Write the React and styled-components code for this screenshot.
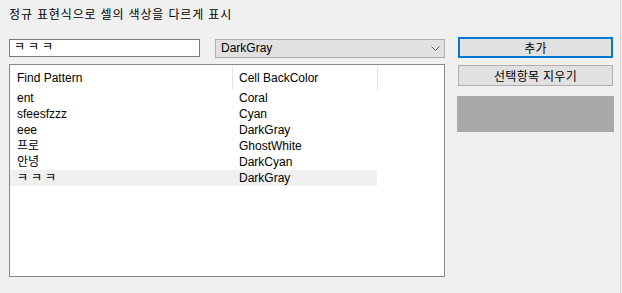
import React from "react";
import styled, { createGlobalStyle } from "styled-components";

const Global = createGlobalStyle`
  * { box-sizing: border-box; }
  html, body { margin: 0; padding: 0; background: #f0f0f0; }
  body {
    font-family: "Liberation Sans", "Noto Sans CJK KR", sans-serif;
    font-size: 12px;
    color: #000;
  }
`;

const Page = styled.div`
  width: 621px;
  height: 293px;
  border-right: 1px solid #d9d9d9;
  background: #f0f0f0;
  padding: 7px 0 0 9px;
  display: flex;
  flex-direction: column;
`;

const Title = styled.div`
  height: 16px;
  line-height: 16px;
  letter-spacing: 0.85px;
  white-space: nowrap;
`;

const Main = styled.div`
  margin-top: 14px;
  display: flex;
  align-items: flex-start;
  gap: 12px;
`;

const LeftColumn = styled.div`
  width: 436px;
  padding-top: 2px;
  display: flex;
  flex-direction: column;
`;

const InputRow = styled.div`
  display: flex;
  align-items: flex-start;
  gap: 15px;
`;

const TextBox = styled.div`
  width: 191px;
  height: 18px;
  border: 1px solid #7a7a7a;
  background: #fff;
  padding-left: 4px;
  line-height: 14px;
  white-space: nowrap;
`;

const Jamo = styled.span`
  letter-spacing: 3px;
`;

const Combo = styled.div`
  width: 230px;
  height: 19px;
  border: 1px solid #adadad;
  background: #e1e1e1;
  padding: 0 4px 0 5px;
  display: flex;
  align-items: center;
  justify-content: space-between;
`;

const ComboText = styled.span`
  line-height: 17px;
`;

const ListView = styled.div`
  margin-top: 6px;
  height: 213px;
  border: 1px solid #828790;
  background: #fff;
  display: flex;
  flex-direction: column;
`;

const HeaderRow = styled.div`
  display: flex;
  height: 25px;
`;

const HeaderCell = styled.div`
  width: ${(p) => p.$w}px;
  padding-left: ${(p) => p.$pad}px;
  display: flex;
  align-items: center;
  position: relative;
  white-space: nowrap;
  &::after {
    content: "";
    position: absolute;
    right: 0;
    top: 1px;
    bottom: 0;
    width: 1px;
    background: #e5e5e5;
  }
`;

const Row = styled.div`
  display: flex;
  width: 367px;
  height: 16px;
  line-height: 16px;
  background: ${(p) => (p.$hover ? "#f0f0f0" : "transparent")};
`;

const Cell = styled.div`
  width: ${(p) => p.$w}px;
  padding-left: ${(p) => p.$pad}px;
  white-space: nowrap;
  overflow: hidden;
`;

const RightColumn = styled.div`
  width: 157px;
  display: flex;
  flex-direction: column;
`;

const Button = styled.div`
  margin-left: 1px;
  margin-top: ${(p) => p.$mt || 0}px;
  width: 155px;
  height: 21px;
  background: #e1e1e1;
  border: ${(p) => (p.$focused ? "2px solid #0078d7" : "1px solid #adadad")};
  display: flex;
  align-items: center;
  justify-content: center;
  letter-spacing: 0.3px;
  white-space: nowrap;
`;

const ColorPanel = styled.div`
  margin-top: 10px;
  width: 157px;
  height: 36px;
  background: ${(p) => p.$color};
`;

const rows = [
  ["ent", "Coral"],
  ["sfeesfzzz", "Cyan"],
  ["eee", "DarkGray"],
  ["프로", "GhostWhite"],
  ["안녕", "DarkCyan"],
  ["ㅋㅋㅋ", "DarkGray"],
];

const isJamo = (s) => /^[\u3131-\u318E]+$/.test(s);

export default function App() {
  return (
    <>
      <Global />
      <Page>
        <Title>정규 표현식으로 셀의 색상을 다르게 표시</Title>
        <Main>
          <LeftColumn>
            <InputRow>
              <TextBox><Jamo>ㅋㅋㅋ</Jamo></TextBox>
              <Combo>
                <ComboText>DarkGray</ComboText>
                <svg width="9" height="5" viewBox="0 0 9 5">
                  <polyline points="0.5,0.5 4.5,4.5 8.5,0.5" fill="none" stroke="#606060" strokeWidth="1" />
                </svg>
              </Combo>
            </InputRow>
            <ListView>
              <HeaderRow>
                <HeaderCell $w={223} $pad={7}>Find Pattern</HeaderCell>
                <HeaderCell $w={145} $pad={6}>Cell BackColor</HeaderCell>
              </HeaderRow>
              {rows.map(([p, c], i) => (
                <Row key={i} $hover={i === rows.length - 1}>
                  <Cell $w={223} $pad={7}>{isJamo(p) ? <Jamo>{p}</Jamo> : p}</Cell>
                  <Cell $w={144} $pad={6}>{c}</Cell>
                </Row>
              ))}
            </ListView>
          </LeftColumn>
          <RightColumn>
            <Button $focused>추가</Button>
            <Button $mt={7}>선택항목 지우기</Button>
            <ColorPanel $color="#a9a9a9" />
          </RightColumn>
        </Main>
      </Page>
    </>
  );
}
